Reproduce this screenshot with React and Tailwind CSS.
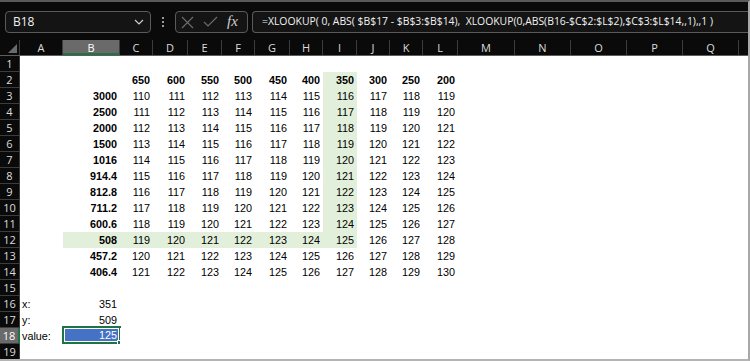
import React from "react";

const COLS = [
  { l: "A", w: "w-[43px]" },
  { l: "B", w: "w-[57px]" },
  { l: "C", w: "w-[33px]" },
  { l: "D", w: "w-[35px]" },
  { l: "E", w: "w-[34px]" },
  { l: "F", w: "w-[33px]" },
  { l: "G", w: "w-[35px]" },
  { l: "H", w: "w-[33px]" },
  { l: "I", w: "w-[34px]" },
  { l: "J", w: "w-[33px]" },
  { l: "K", w: "w-[33px]" },
  { l: "L", w: "w-[35px]" },
  { l: "M", w: "w-[57px]" },
  { l: "N", w: "w-[56px]" },
  { l: "O", w: "w-[56px]" },
  { l: "P", w: "w-[56px]" },
  { l: "Q", w: "w-[56px]" },
];

const X_VALS = [650, 600, 550, 500, 450, 400, 350, 300, 250, 200];
const Y_VALS = ["3000", "2500", "2000", "1500", "1016", "914.4", "812.8", "711.2", "600.6", "508", "457.2", "406.4"];

// builds the 17 cells (A..Q) for one sheet row
function rowCells(r) {
  const cells = COLS.map(() => ({ t: "", bold: false, left: false, hl: false, sel: false }));
  if (r === 2) {
    X_VALS.forEach((v, c) => {
      cells[c + 2] = { ...cells[c + 2], t: String(v), bold: true, hl: c === 6 };
    });
  }
  if (r >= 3 && r <= 14) {
    const i = r - 3;
    cells[1] = { ...cells[1], t: Y_VALS[i], bold: true, hl: i === 9 };
    X_VALS.forEach((_, c) => {
      const hl = (c === 6 && i <= 9) || (i === 9 && c <= 6);
      cells[c + 2] = { ...cells[c + 2], t: String(110 + i + c), hl };
    });
  }
  if (r === 16) {
    cells[0] = { ...cells[0], t: "x:", left: true };
    cells[1] = { ...cells[1], t: "351" };
  }
  if (r === 17) {
    cells[0] = { ...cells[0], t: "y:", left: true };
    cells[1] = { ...cells[1], t: "509" };
  }
  if (r === 18) {
    cells[0] = { ...cells[0], t: "value:", left: true };
    cells[1] = { ...cells[1], t: "125", sel: true };
  }
  return cells;
}

const FormulaBar = () => (
  <div className="flex items-start h-[38px] pt-[9px] pl-[5px] gap-[4px] bg-[#0a0a0a]">
    {/* name box */}
    <div className="flex items-center justify-between w-[146px] h-[22px] rounded-[4px] border border-[#5a5a5a] bg-[#141414] pl-[7px] pr-[6px]">
      <span className="text-[12px] text-[#f0f0f0] font-['Open_Sans',sans-serif]">B18</span>
      <svg width="10" height="6" viewBox="0 0 10 6">
        <polyline points="1,1 5,5 9,1" fill="none" stroke="#cfcfcf" strokeWidth="1.2" />
      </svg>
    </div>
    <div className="flex flex-col items-center justify-center gap-[2px] w-[16px] h-[22px]">
      <span className="w-[2px] h-[2px] bg-[#9a9a9a]" />
      <span className="w-[2px] h-[2px] bg-[#9a9a9a]" />
      <span className="w-[2px] h-[2px] bg-[#9a9a9a]" />
    </div>
    <div className="flex items-center w-[73px] h-[22px] rounded-[4px] border border-[#5a5a5a] bg-[#141414] pl-[5px] gap-[9px]">
      <svg width="13" height="13" viewBox="0 0 13 13">
        <path d="M1 1 L12 12 M12 1 L1 12" stroke="#6e6e6e" strokeWidth="1.1" />
      </svg>
      <svg width="15" height="12" viewBox="0 0 15 12">
        <polyline points="1,6 5,10 14,1" fill="none" stroke="#6e6e6e" strokeWidth="1.1" />
      </svg>
      <span className="text-[15px] italic leading-none text-[#d0d0d0] font-['Liberation_Serif',serif] -mt-[2px]">fx</span>
    </div>
    <div className="flex items-center flex-1 h-[22px] rounded-l-[4px] border border-r-0 border-[#5a5a5a] bg-[#141414] pl-[9px] whitespace-pre overflow-hidden">
      <span className="text-[10.4px] text-[#f2f2f2] font-['Open_Sans',sans-serif]">
        =XLOOKUP( 0, ABS( $B$17 - $B$3:$B$14),  XLOOKUP(0,ABS(B16-$C$2:$L$2),$C$3:$L$14,,1),,1 )
      </span>
    </div>
  </div>
);

const HeaderRow = () => (
  <div className="flex h-[16px] border-b border-[#5c5c5c] bg-[#0a0a0a] font-['Open_Sans',sans-serif] text-[11px] leading-[15px]">
    <div className="relative w-[20px] border-r border-[#3c3c3c]">
      <svg className="absolute right-[2px] bottom-[2px]" width="9" height="9" viewBox="0 0 9 9">
        <polygon points="9,0 9,9 0,9" fill="#6a6a6a" />
      </svg>
    </div>
    {COLS.map((c) =>
      c.l === "B" ? (
        <div key={c.l} className={`${c.w} text-center bg-[#6a6a6a] text-white border-r border-[#3c3c3c] border-b-2 border-b-[#217346]`}>
          {c.l}
        </div>
      ) : (
        <div key={c.l} className={`${c.w} text-center text-[#dcdcdc] border-r border-[#3c3c3c]`}>
          {c.l}
        </div>
      )
    )}
    <div className="flex-1" />
  </div>
);

const SheetRow = ({ r }) => {
  const cells = rowCells(r);
  const active = r === 18;
  return (
    <div className="flex h-[16px]">
      <div
        className={
          active
            ? "w-[20px] text-center text-[11px] leading-[15px] font-['Open_Sans',sans-serif] bg-[#6a6a6a] text-white border-r-2 border-r-[#217346] border-b border-[#3c3c3c]"
            : "w-[20px] text-center text-[11px] leading-[15px] font-['Open_Sans',sans-serif] bg-[#0a0a0a] text-[#dcdcdc] border-r border-b border-[#3c3c3c]"
        }
      >
        {r}
      </div>
      {cells.map((c, k) => (
        <div
          key={k}
          className={`${COLS[k].w} relative flex items-center ${c.left ? "justify-start pl-[2px]" : "justify-end pr-[3px]"} ${
            c.hl ? "bg-[#e2efda]" : "bg-white"
          } ${c.bold ? "font-bold" : ""} text-[10.8px] text-black font-['Liberation_Sans',sans-serif] whitespace-nowrap`}
        >
          {c.sel ? (
            <div className="absolute left-[-1px] right-[-1px] top-[-2px] bottom-0 border-2 border-[#217346] bg-white p-[1px]">
              <div className="flex items-center justify-end h-full bg-[#4472c4] pr-[1px] text-white">{c.t}</div>
              <span className="absolute right-[-4px] bottom-[-4px] w-[6px] h-[6px] bg-[#217346] border border-white" />
            </div>
          ) : (
            c.t
          )}
        </div>
      ))}
      <div className="flex-1 bg-white" />
    </div>
  );
};

export default function App() {
  const rows = Array.from({ length: 19 }, (_, i) => i + 1);
  return (
    <div className="w-[750px] h-[361px] overflow-hidden bg-[#0a0a0a] border-t-2 border-t-[#5a5a5a] border-r-2 border-r-[#a8a8a8] border-b-2 border-b-[#b4b4b4]">
      <FormulaBar />
      <HeaderRow />
      <div className="bg-white">
        {rows.map((r) => (
          <SheetRow key={r} r={r} />
        ))}
      </div>
    </div>
  );
}
